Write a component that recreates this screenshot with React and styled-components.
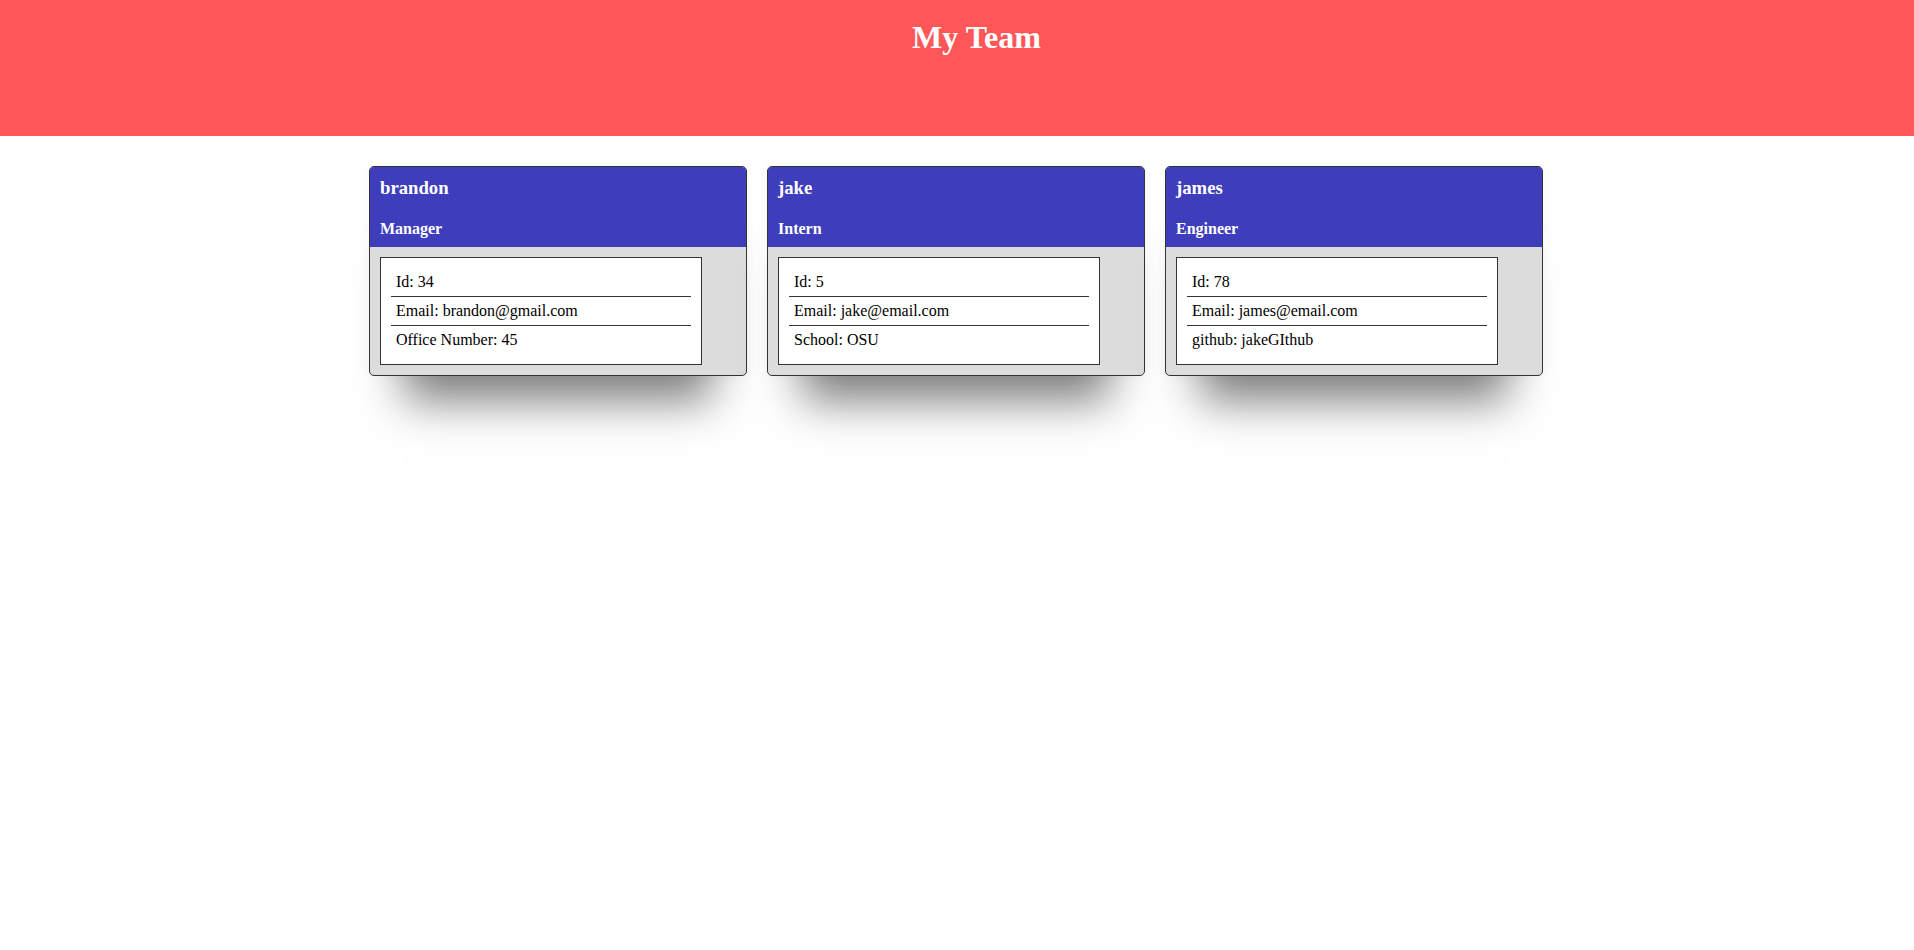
import React from "react";
import styled, { createGlobalStyle } from "styled-components";

const GlobalStyle = createGlobalStyle`
  body {
    margin: 0;
    background: #fff;
    font-family: "Liberation Serif", "Times New Roman", serif;
    color: #000;
  }
`;

const Page = styled.div`
  min-height: 100vh;
  background: #fff;
`;

const Banner = styled.header`
  height: 136px;
  box-sizing: border-box;
  padding: 19px 0 0 39px;
  background: #ff5757;
  text-align: center;
`;

const Title = styled.h1`
  margin: 0;
  font-size: 32px;
  font-weight: bold;
  color: #fff;
`;

const Team = styled.main`
  display: flex;
  justify-content: center;
  gap: 20px;
  padding: 30px 2px 0 0;
`;

const Card = styled.div`
  width: 378px;
  box-sizing: border-box;
  border: 1px solid #333;
  border-radius: 5px;
  overflow: hidden;
  background: #dcdcdc;
  box-shadow: 0 60px 42px -35px rgba(0, 0, 0, 0.5),
    0 0 14px rgba(0, 0, 0, 0.04);
`;

const CardHeader = styled.div`
  padding: 10px 10px 9px;
  background: #3e3dbb;
  color: #fff;
`;

const Name = styled.h3`
  margin: 0;
  font-size: 18.72px;
`;

const Role = styled.h4`
  margin: 21px 0 0;
  font-size: 16px;
`;

const CardBody = styled.div`
  padding: 10px;
`;

const InfoList = styled.ul`
  list-style: none;
  margin: 0;
  width: 300px;
  padding: 10px;
  background: #fff;
  border: 1px solid #333;
`;

const InfoItem = styled.li`
  padding: 5px;
  font-size: 16px;
  border-bottom: 1px solid #333;

  &:last-child {
    border-bottom: none;
  }
`;

const team = [
  {
    name: "brandon",
    role: "Manager",
    id: 34,
    email: "brandon@gmail.com",
    extra: "Office Number: 45",
  },
  { name: "jake", role: "Intern", id: 5, email: "jake@email.com", extra: "School: OSU" },
  {
    name: "james",
    role: "Engineer",
    id: 78,
    email: "james@email.com",
    extra: "github: jakeGIthub",
  },
];

const App = () => {
  return (
    <Page>
      <GlobalStyle />
      <Banner>
        <Title>My Team</Title>
      </Banner>
      <Team>
        {team.map((member) => (
          <Card key={member.name}>
            <CardHeader>
              <Name>{member.name}</Name>
              <Role>{member.role}</Role>
            </CardHeader>
            <CardBody>
              <InfoList>
                <InfoItem>Id: {member.id}</InfoItem>
                <InfoItem>Email: {member.email}</InfoItem>
                <InfoItem>{member.extra}</InfoItem>
              </InfoList>
            </CardBody>
          </Card>
        ))}
      </Team>
    </Page>
  );
};

export default App;
